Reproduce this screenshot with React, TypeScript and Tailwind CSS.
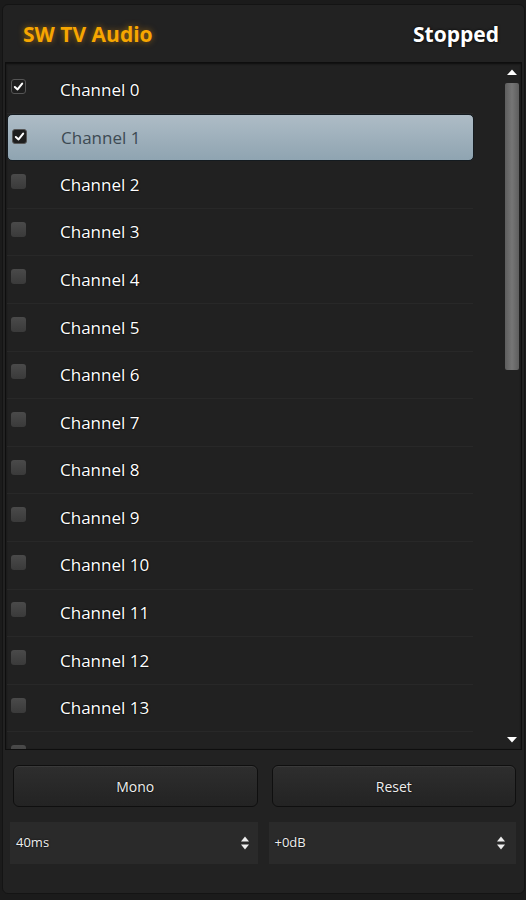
import React from "react";

const channels = Array.from({ length: 15 }, (_, i) => i);

function Check({ checked }: { checked: boolean }) {
  return (
    <div
      className={
        "w-[15px] h-[15px] rounded-[3px] flex items-center justify-center " +
        (checked
          ? "bg-[#1e1e1e] border border-[#555]"
          : "bg-gradient-to-b from-[#4a4a4a] to-[#3a3a3a]")
      }
    >
      {checked && (
        <svg width="11" height="11" viewBox="0 0 12 12">
          <path d="M2 6.5 L5 9.2 L10 2.8" stroke="#fff" strokeWidth="2.2" fill="none" strokeLinecap="round" strokeLinejoin="round" />
        </svg>
      )}
    </div>
  );
}

function Spin() {
  return (
    <svg width="10" height="16" viewBox="0 0 10 16">
      <path d="M1 6.5 L5 1.5 L9 6.5 Z" fill="#eee" />
      <path d="M1 9.5 L5 14.5 L9 9.5 Z" fill="#eee" />
    </svg>
  );
}

export default function App() {
  return (
    <div className="w-[526px] h-[900px] bg-[#1b1b1b] pt-[4px] pl-[2px] pr-[1px] pb-[6px] [font-family:'Open_Sans','Noto_Sans',sans-serif]">
      <div className="h-full rounded-[6px] border border-[#141414] bg-[#222222] flex flex-col">
        {/* header */}
        <div className="h-[57px] shrink-0 flex items-center justify-between pl-[20px] pr-[25px] pt-[3px]">
          <span className="text-[#f7a600] font-bold text-[21px] [text-shadow:0_0_6px_rgba(255,160,0,0.55)]">
            SW TV Audio
          </span>
          <span className="text-white font-bold text-[21px] [text-shadow:0_0_3px_#000]">Stopped</span>
        </div>
        {/* list */}
        <div className="mx-[2px] h-[688px] shrink-0 border border-[#0e0e0e] bg-[#212121] flex overflow-hidden shadow-[inset_0_1px_2px_rgba(0,0,0,0.6)]">
          <div className="flex-1 pt-[3px] pl-[1px] overflow-hidden">
            {channels.map((i) => {
              const sel = i === 1;
              const last = i === 14;
              return (
                <div
                  key={i}
                  className={
                    "h-[47.6px] flex items-center pl-[4px] " +
                    (sel
                      ? "w-[467px] rounded-[5px] border border-[#141b20] bg-gradient-to-b from-[#aebcc6] to-[#8fa4b1]"
                      : "w-[466px] border-b border-[#282828]")
                  }
                >
                  <div className={sel ? "mt-[-2px]" : "mt-[-6px]"}>
                    <Check checked={i <= 1} />
                  </div>
                  {!last && (
                    <span
                      className={
                        "ml-[34px] text-[17px] " +
                        (sel
                          ? "text-[#3d4a53]"
                          : "text-white [text-shadow:0_0_2px_#000,0_0_1px_#000]")
                      }
                    >
                      Channel {i}
                    </span>
                  )}
                </div>
              );
            })}
          </div>
          <div className="w-[18px] shrink-0 flex flex-col items-center pt-[5px] pb-[5px]">
            <svg width="12" height="8" viewBox="0 0 12 8">
              <path d="M1 7 L6 1.5 L11 7 Z" fill="#fff" />
            </svg>
            <div className="mt-[7px] w-[14px] h-[287px] rounded-[2px] bg-gradient-to-r from-[#5e5e5e] via-[#767676] to-[#5e5e5e]" />
            <div className="flex-1" />
            <svg width="12" height="8" viewBox="0 0 12 8">
              <path d="M1 1 L6 6.5 L11 1 Z" fill="#fff" />
            </svg>
          </div>
        </div>
        {/* buttons */}
        <div className="mt-[15px] pl-[10px] pr-[8px] grid grid-cols-2 gap-[14px]">
          <div className="h-[42px] rounded-[6px] border border-[#0f0f0f] bg-gradient-to-b from-[#2e2e2e] to-[#232323] shadow-[inset_0_1px_0_rgba(255,255,255,0.06)] flex items-center justify-center text-[14px] text-[#eee] [text-shadow:0_0_2px_#000]">
            Mono
          </div>
          <div className="h-[42px] rounded-[6px] border border-[#0f0f0f] bg-gradient-to-b from-[#2e2e2e] to-[#232323] shadow-[inset_0_1px_0_rgba(255,255,255,0.06)] flex items-center justify-center text-[14px] text-[#eee] [text-shadow:0_0_2px_#000]">
            Reset
          </div>
        </div>
        {/* selects */}
        <div className="mt-[15px] pl-[7px] pr-[8px] grid grid-cols-2 gap-[11px]">
          <div className="h-[42px] bg-[#2a2a2a] flex items-center justify-between pl-[6px] pr-[8px] text-[13px] text-[#eee] [text-shadow:0_0_2px_#000]">
            <span>40ms</span>
            <Spin />
          </div>
          <div className="h-[42px] bg-[#2a2a2a] flex items-center justify-between pl-[6px] pr-[10px] text-[13px] text-[#eee] [text-shadow:0_0_2px_#000]">
            <span>+0dB</span>
            <Spin />
          </div>
        </div>
      </div>
    </div>
  );
}
